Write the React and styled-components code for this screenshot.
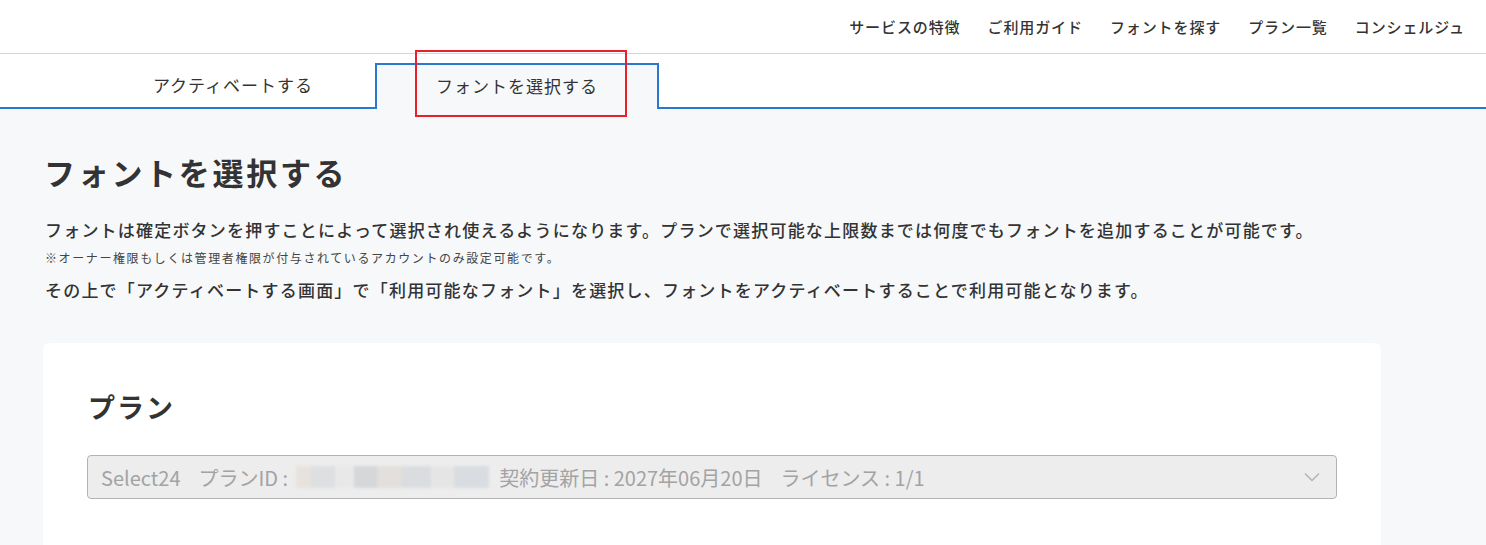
import React from 'react'
import styled, { createGlobalStyle } from 'styled-components'

const GlobalStyle = createGlobalStyle`
    html, body {
        margin: 0;
        padding: 0;
        background: #f7f8fa;
    }
    body {
        font-family: "Noto Sans CJK JP", "Noto Sans", sans-serif;
        color: #333;
        overflow: hidden;
    }
    * {
        box-sizing: border-box;
    }
`

const BLUE = '#2878d0'

const Header = styled.header`
    height: 54px;
    background: #fff;
    border-bottom: 1px solid #d6d6d6;
    display: flex;
    justify-content: flex-end;
    align-items: center;
    padding: 0 21px 1px 0;
`

const Nav = styled.nav`
    display: flex;
    gap: 27px;
    a {
        font-size: 15px;
        font-weight: 500;
        letter-spacing: 0.9px;
        color: #333;
        text-decoration: none;
    }
`

const TabBar = styled.div`
    background: #fff;
    height: 55px;
    padding: 9px 0 0 91px;
    display: flex;
    align-items: flex-end;
    border-bottom: 2px solid ${BLUE};
`

const Tab = styled.div`
    position: relative;
    width: 284px;
    height: 46px;
    margin-bottom: -2px;
    display: flex;
    align-items: center;
    justify-content: center;
    font-size: 17px;
    letter-spacing: 1px;
    color: #333;
    padding-bottom: ${p => (p.active ? '3px' : '6px')};
    background: ${p => (p.active ? '#f7f8fa' : 'transparent')};
    border: 2px solid ${p => (p.active ? BLUE : 'transparent')};
    border-bottom: none;
`

const Marker = styled.div`
    position: absolute;
    left: 38px;
    top: -15px;
    width: 212px;
    height: 67px;
    border: 2px solid #e8202a;
    pointer-events: none;
`

const Main = styled.main`
    padding: 38px 105px 0 43px;
`

const Title = styled.h1`
    margin: 0 0 0 1px;
    font-size: 31px;
    line-height: 50px;
    font-weight: 700;
    letter-spacing: 2.7px;
    color: #333;
`

const Lead = styled.p`
    margin: ${p => p.top || 0}px 0 0 2px;
    font-size: ${p => (p.small ? 12 : 17)}px;
    line-height: ${p => (p.small ? 20 : 26)}px;
    letter-spacing: ${p => (p.small ? 1.6 : 1.2)}px;
    font-weight: ${p => (p.small ? 400 : 500)};
    color: ${p => (p.small ? '#444' : '#333')};
    white-space: nowrap;
`

const Card = styled.section`
    margin-top: 40px;
    background: #fff;
    border-radius: 7px;
    padding: 45px 44px 80px 44px;
    min-height: 260px;
`

const CardTitle = styled.h2`
    margin: 0 0 0 1px;
    font-size: 27px;
    line-height: 38px;
    font-weight: 700;
    letter-spacing: 2px;
    color: #333;
`

const Select = styled.div`
    margin-top: 29px;
    height: 44px;
    background: #ededed;
    border: 1px solid #b3b3b3;
    border-radius: 4px;
    display: flex;
    align-items: center;
    padding: 0 16px 0 13px;
    color: #a3a3a3;
    font-size: 20px;
    font-weight: 400;
`

const Values = styled.div`
    flex: 1;
    display: flex;
    align-items: center;
    gap: 18px;
    white-space: nowrap;
`

const Blurred = styled.span`
    display: inline-block;
    width: 193px;
    height: 22px;
    margin-left: -10px;
    margin-right: -8px;
    background:
        linear-gradient(90deg, #e6e0da 0 8%, #dadcdf 8% 20%, #e8e8e8 20% 30%, #d0d2d5 30% 42%, #e0dcd8 42% 55%, #d6d9dc 55% 70%, #e4e4e4 70% 82%, #d5d9de 82% 100%);
    filter: blur(1.5px);
    opacity: 0.8;
`

const Chevron = () => (
    <svg width="16" height="10" viewBox="0 0 16 10" fill="none">
        <path d="M1 1.5 L8 8.5 L15 1.5" stroke="#b0b0b0" strokeWidth="1.3" />
    </svg>
)

const navItems = ['サービスの特徴', 'ご利用ガイド', 'フォントを探す', 'プラン一覧', 'コンシェルジュ']

export default function App() {
    return (
        <div>
            <GlobalStyle />
            <Header>
                <Nav>
                    {navItems.map(n => (
                        <a key={n} href="#">{n}</a>
                    ))}
                </Nav>
            </Header>
            <TabBar>
                <Tab>アクティベートする</Tab>
                <Tab active>
                    フォントを選択する
                    <Marker />
                </Tab>
            </TabBar>
            <Main>
                <Title>フォントを選択する</Title>
                <Lead top={20}>
                    フォントは確定ボタンを押すことによって選択され使えるようになります。プランで選択可能な上限数までは何度でもフォントを追加することが可能です。
                </Lead>
                <Lead small top={5}>※オーナー権限もしくは管理者権限が付与されているアカウントのみ設定可能です。</Lead>
                <Lead top={9}>
                    その上で「アクティベートする画面」で「利用可能なフォント」を選択し、フォントをアクティベートすることで利用可能となります。
                </Lead>
                <Card>
                    <CardTitle>プラン</CardTitle>
                    <Select>
                        <Values>
                            <span>Select24</span>
                            <span>プランID :</span>
                            <Blurred />
                            <span>契約更新日 : 2027年06月20日</span>
                            <span>ライセンス : 1/1</span>
                        </Values>
                        <Chevron />
                    </Select>
                </Card>
            </Main>
        </div>
    )
}
